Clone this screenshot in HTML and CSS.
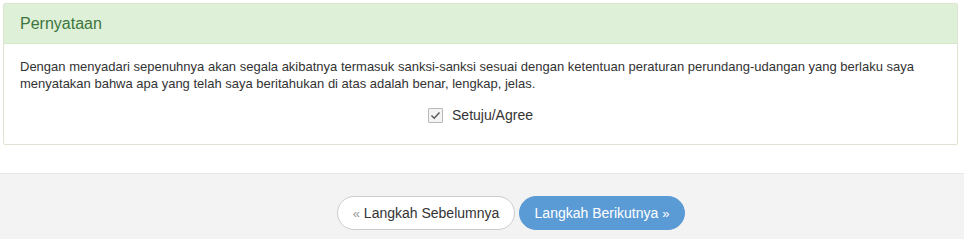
FILE: index.html
```html
<!DOCTYPE html>
<html>
<head>
<meta charset="utf-8">
<link rel="stylesheet" href="styles.css">
</head>
<body>
<div class="wrap">
  <div class="panel">
    <div class="panel-heading">Pernyataan</div>
    <div class="panel-body">
      <p class="statement">Dengan menyadari sepenuhnya akan segala akibatnya termasuk sanksi-sanksi sesuai dengan ketentuan peraturan perundang-udangan yang berlaku saya menyatakan bahwa apa yang telah saya beritahukan di atas adalah benar, lengkap, jelas.</p>
      <label class="agree">
        <span class="check"><svg width="13" height="13" viewBox="0 0 13 13"><path d="M2.5 6.5 L5.2 9.2 L10.5 3.5" fill="none" stroke="#5a5a5a" stroke-width="1.5"/></svg></span>
        <span>Setuju/Agree</span>
      </label>
    </div>
  </div>
</div>
<div class="footer">
  <button class="btn btn-prev"><span class="chev">&laquo;</span> Langkah Sebelumnya</button>
  <button class="btn btn-next">Langkah Berikutnya <span class="chev2">&raquo;</span></button>
</div>
</body>
</html>
```
FILE: styles.css
```css
html, body {
  margin: 0;
  padding: 0;
  background: #fff;
  font-family: "Liberation Sans", Arial, sans-serif;
  color: #333;
}
.wrap {
  padding: 3px 6px 0 3px;
  height: 173px;
  box-sizing: border-box;
}
.panel {
  border: 1px solid #dde5d2;
  border-radius: 2px;
  background: #fff;
}
.panel-heading {
  background: #dff0d8;
  color: #3c763d;
  font-size: 16px;
  height: 39px;
  line-height: 39px;
  padding: 0 16px;
  border-bottom: 1px solid #d6e9c6;
}
.panel-body {
  padding: 14px 16px 0 16px;
  height: 86px;
}
.statement {
  margin: 0;
  font-size: 13px;
  line-height: 17px;
}
.agree {
  display: flex;
  justify-content: center;
  align-items: center;
  gap: 9px;
  margin-top: 15px;
  font-size: 14px;
}
.check {
  width: 13px;
  height: 13px;
  border: 1px solid #b8b8b8;
  border-radius: 1px;
  background: #f4f4f4;
  display: flex;
}
.check svg { display: block; }
.footer {
  background: #f3f3f3;
  border-top: 1px solid #e6e6e6;
  height: 66px;
  display: flex;
  justify-content: center;
  align-items: flex-start;
  padding: 22px 0 0 58px;
  gap: 4px;
  box-sizing: border-box;
}
.btn {
  font-family: "Liberation Sans", Arial, sans-serif;
  font-size: 14px;
  height: 34px;
  border-radius: 17px;
  padding: 0 13px;
  cursor: pointer;
}
.btn-prev {
  background: #fff;
  border: 1px solid #ccc;
  color: #333;
  width: 178px;
}
.btn-next {
  background: #5b9bd5;
  border: 1px solid #5b9bd5;
  color: #fff;
  width: 166px;
}
.chev { color: #999; font-size: 13px; }
.chev2 { font-size: 13px; }
```
